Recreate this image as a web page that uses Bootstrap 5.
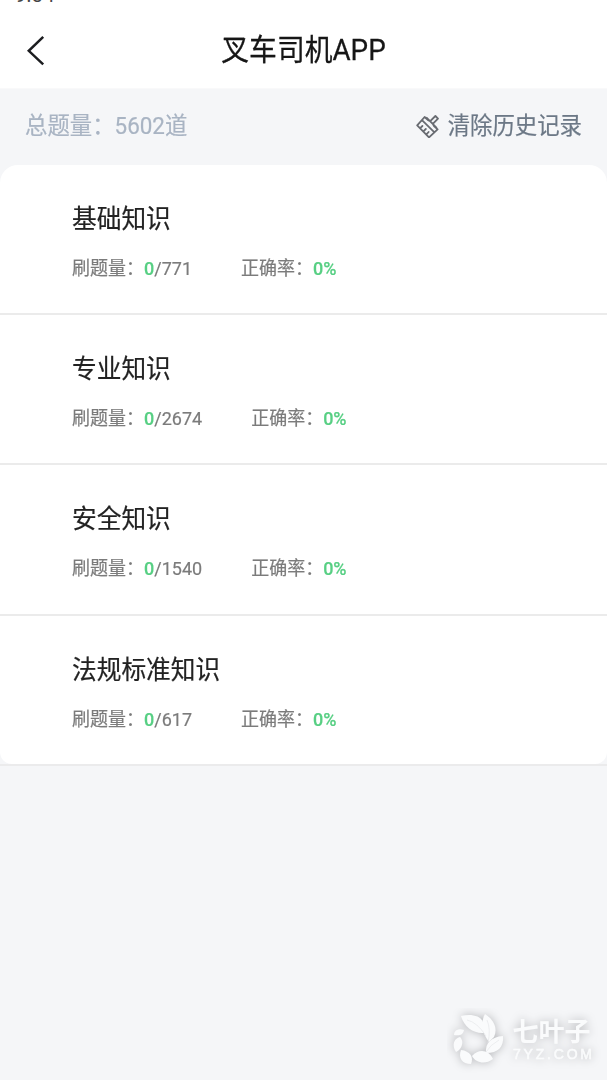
<!DOCTYPE html>
<html lang="zh-CN">
<head>
<meta charset="utf-8">
<meta name="viewport" content="width=device-width, initial-scale=1">
<title>叉车司机APP</title>
<link href="https://cdn.jsdelivr.net/npm/bootstrap@5.3.0/dist/css/bootstrap.min.css" rel="stylesheet">
<style>
body{background:#f5f6f8;font-family:Roboto,"Noto Sans CJK SC",sans-serif;height:1080px;overflow:hidden}
.top-area{height:89px;background:#fff;border-bottom:1px solid #f9f9fa}
.status-time{left:15px;top:-15px;font-size:19.5px;line-height:22px;color:#444;letter-spacing:.6px}
.back-btn{left:24px;top:35px;line-height:0}
.page-title{font-size:27.8px;line-height:40px;color:#161616;padding-top:31px;-webkit-text-stroke:.25px #161616}
.tall{display:inline-block;transform:scaleY(1.05)}
.summary{height:76px;padding:0 25px 2px;font-size:22.4px;line-height:30px;-webkit-text-stroke:.2px}
.total{color:#a9b4c3}
.clear-link{color:#6c7886}
.topics{border-radius:18px 18px 0 0;overflow:hidden;background:#f5f6f8;border-bottom:2px solid #ebebec}
.topic{height:150.2px;padding:37px 0 0 72px;background:#fff;border-bottom:2px solid #ebebeb}
.topic:last-child{border-bottom:0;height:148px;border-radius:0 0 12px 12px}
.topic-name{font-size:24.7px;line-height:36px;color:#222;-webkit-text-stroke:.2px}
.stats{font-size:18px;line-height:26px;margin-top:18px;color:#7b7b7b;gap:49px;-webkit-text-stroke:.2px}
.stats b{font-weight:500;color:#57cf83}
.watermark{left:447px;top:1008px;color:#fff}
</style>
</head>
<body>
<header class="top-area position-relative text-center">
  <span class="status-time position-absolute">9:34</span>
  <a class="back-btn position-absolute" href="#" aria-label="返回"><svg width="24" height="32" viewBox="0 0 24 32" fill="none" stroke="#1c1d20" stroke-width="2.5"><path d="M19.2 1.8 4.8 15.8 19.2 29.3"/></svg></a>
  <h1 class="page-title fw-normal m-0"><span class="tall">叉车司机APP</span></h1>
</header>
<main>
  <div class="summary d-flex align-items-center justify-content-between">
    <span class="total tall">总题量：5602道</span>
    <span class="clear-link d-flex align-items-center">
      <svg class="me-2" width="24" height="24" viewBox="0 0 24 24" fill="none" stroke="#686b71" stroke-width="1.8" stroke-linejoin="round" stroke-linecap="round"><path d="M8.6 3 12 6.2 14.2 7.2 19.4 2 22 4.6 16.8 9.8 18 12 21.6 15.4 13 23.4 1.2 11.4ZM6 6.2 18.2 18.2M10.8 3.8 20.4 13.6M4.2 14.2 6.4 12M7.4 17.4l2.4-2.4M10.4 20.4l2.2-2.4"/></svg>
      <span class="tall">清除历史记录</span>
    </span>
  </div>
  <div class="topics">
    <section class="topic"><h2 class="topic-name fw-normal m-0"><span class="tall">基础知识</span></h2><div class="stats d-flex"><span class="tall">刷题量：<b>0</b>/771</span><span class="tall">正确率：<b>0%</b></span></div></section>
    <section class="topic"><h2 class="topic-name fw-normal m-0"><span class="tall">专业知识</span></h2><div class="stats d-flex"><span class="tall">刷题量：<b>0</b>/2674</span><span class="tall">正确率：<b>0%</b></span></div></section>
    <section class="topic"><h2 class="topic-name fw-normal m-0"><span class="tall">安全知识</span></h2><div class="stats d-flex"><span class="tall">刷题量：<b>0</b>/1540</span><span class="tall">正确率：<b>0%</b></span></div></section>
    <section class="topic"><h2 class="topic-name fw-normal m-0"><span class="tall">法规标准知识</span></h2><div class="stats d-flex"><span class="tall">刷题量：<b>0</b>/617</span><span class="tall">正确率：<b>0%</b></span></div></section>
  </div>
</main>
<svg class="watermark position-absolute" width="160" height="68" viewBox="0 0 160 68">
  <g style="filter:drop-shadow(0 0 5px #b4b5b8)" fill="#fafbfc">
    <path d="M14 8C23 6 33 7 36 14L37 25C27 26 17 19 14 8Z"/>
    <path d="M38 6C47 12 51 20 47 29L42 34C35 25 33 15 38 6Z"/>
    <path d="M56 28C57 39 51 45 39 45C38 35 44 29 56 28Z"/>
    <path d="M25 48C32 40 42 42 46 51C38 57 29 55 25 48Z"/>
    <path d="M14 42C23 43 27 49 24 56C15 56 11 50 14 42Z"/>
    <path d="M13 29C18 34 14 42 9 44C5 38 6 31 13 29Z"/>
    <path d="M7 27C7 22 12 20 17 22C16 27 12 28 7 27Z"/>
    <path d="M20 12Q30 14 39 28M40 12Q44 21 41 35M52 32Q43 37 39 44" fill="none" stroke="#e9eaec" stroke-width=".8"/>
    <text x="65.5" y="33" font-family="Noto Sans CJK SC, sans-serif" font-size="26" font-weight="700" textLength="78" lengthAdjust="spacingAndGlyphs">七叶子</text>
    <text x="66" y="51" font-family="Liberation Sans, sans-serif" font-size="14" stroke="#fafbfc" stroke-width=".5" textLength="79">7YZ.COM</text>
  </g>
</svg>
<script src="https://cdn.jsdelivr.net/npm/bootstrap@5.3.0/dist/js/bootstrap.bundle.min.js"></script>
</body>
</html>
